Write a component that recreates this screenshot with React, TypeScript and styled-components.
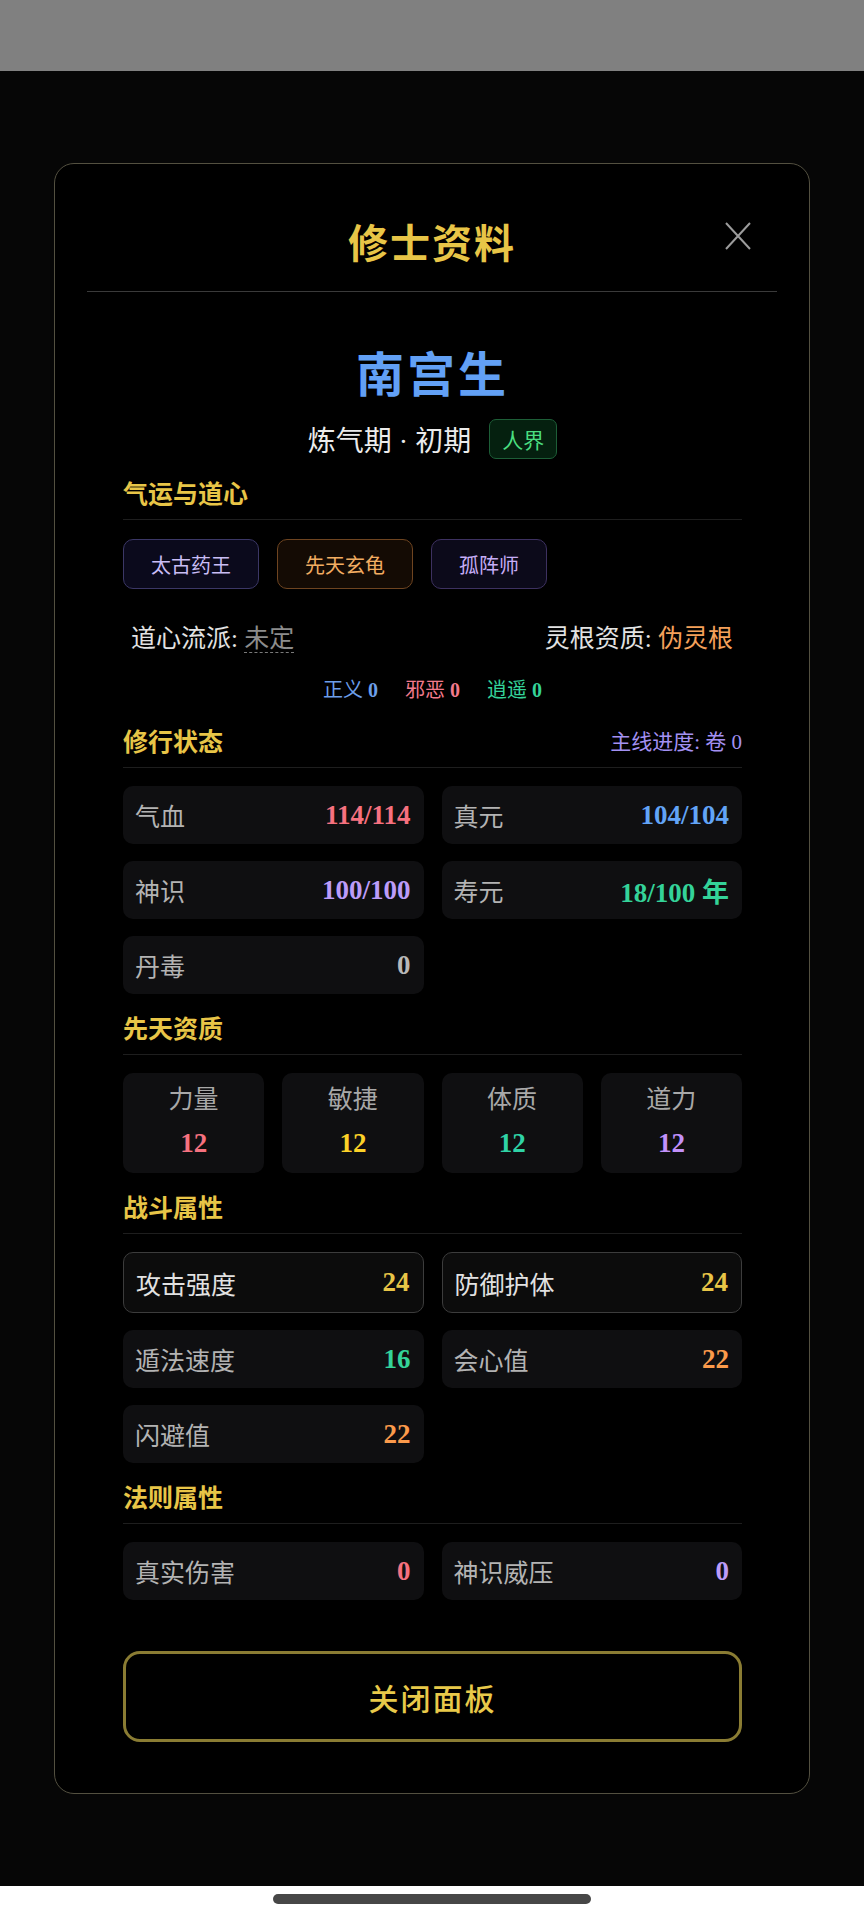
import React from "react";
import styled, { createGlobalStyle } from "styled-components";

const Global = createGlobalStyle`
  html, body { margin: 0; padding: 0; background: #ffffff; }
  body { font-family: "Liberation Serif", "Noto Sans CJK SC", serif; }
  * { box-sizing: border-box; }
`;

const TopBar = styled.div`
  height: 71px;
  background: #808080;
`;

const Screen = styled.div`
  height: 1815px;
  background: #060606;
  padding-top: 92px;
`;

const BottomStrip = styled.div`
  height: 34px;
  background: #ffffff;
  display: flex;
  justify-content: center;
  padding-top: 8px;
`;

const HomeBar = styled.div`
  width: 318px;
  height: 10px;
  border-radius: 5px;
  background: #474747;
`;

const Modal = styled.div`
  width: 756px;
  margin: 0 auto;
  background: #000;
  border: 1px solid #535040;
  border-radius: 20px;
`;

const Header = styled.div`
  margin: 0 32px;
  padding: 49px 0 22px;
  border-bottom: 1px solid #3a3a3a;
  display: grid;
  grid-template-columns: 1fr auto 1fr;
  align-items: center;
`;

const Title = styled.h1`
  grid-column: 2;
  margin: 0;
  font-family: "Noto Sans CJK SC", sans-serif;
  font-size: 40px;
  line-height: 56px;
  font-weight: 700;
  letter-spacing: 2px;
  color: #e8c547;
`;

const CloseIcon = styled.button`
  grid-column: 3;
  justify-self: end;
  margin: 0 25px 10px 0;
  padding: 0;
  width: 28px;
  height: 28px;
  background: none;
  border: none;
  display: flex;
  align-items: center;
  justify-content: center;
`;

const Body = styled.div`
  padding: 49px 67px 51px 68px;
  display: flex;
  flex-direction: column;
`;

const Name = styled.div`
  text-align: center;
  font-family: "Noto Sans CJK SC", sans-serif;
  font-size: 48px;
  line-height: 60px;
  font-weight: 700;
  letter-spacing: 3px;
  color: #62a0f5;
`;

const RealmRow = styled.div`
  margin-top: 18px;
  display: flex;
  justify-content: center;
  align-items: center;
  gap: 18px;
`;

const RealmText = styled.span`
  font-size: 28px;
  color: #ebebeb;
`;

const Badge = styled.span`
  height: 40px;
  padding: 0 12px;
  display: inline-flex;
  align-items: center;
  border-radius: 7px;
  border: 1px solid #1d5e37;
  background: #05200f;
  color: #4ade80;
  font-size: 21px;
`;

const SectionHead = styled.div<{ $mt: number }>`
  margin-top: ${(p) => p.$mt}px;
  padding-bottom: 11px;
  border-bottom: 1px solid #1e1e1e;
  display: flex;
  justify-content: space-between;
  align-items: center;
`;

const SectionTitle = styled.h2`
  margin: 0;
  font-family: "Noto Sans CJK SC", sans-serif;
  font-size: 25px;
  line-height: 32px;
  font-weight: 700;
  color: #e8c547;
`;

const SectionAside = styled.span`
  font-size: 21px;
  color: #a391f2;
`;

const TagRow = styled.div`
  margin-top: 19px;
  display: flex;
  gap: 18px;
`;

const tagTones = {
  violet: { border: "#3b3766", bg: "#0b0a1c", color: "#c9bdf5" },
  amber: { border: "#6e4420", bg: "#140b04", color: "#f2ad62" },
  purple: { border: "#3d3160", bg: "#0c0a1a", color: "#c6adf7" },
};

const Tag = styled.span<{ $tone: keyof typeof tagTones }>`
  height: 50px;
  padding: 0 27px;
  display: inline-flex;
  align-items: center;
  border-radius: 10px;
  border: 1px solid ${(p) => tagTones[p.$tone].border};
  background: ${(p) => tagTones[p.$tone].bg};
  color: ${(p) => tagTones[p.$tone].color};
  font-size: 20px;
`;

const DaoRow = styled.div`
  margin-top: 34px;
  padding: 0 9px 0 8px;
  display: flex;
  justify-content: space-between;
  font-size: 25px;
  line-height: 32px;
  color: #e2e2e2;
`;

const Muted = styled.span`
  color: #8c8c8c;
  border-bottom: 1px dashed #7a7a7a;
`;

const Orange = styled.span`
  color: #f5a05a;
`;

const AlignRow = styled.div`
  margin-top: 22px;
  display: flex;
  justify-content: center;
  gap: 27px;
  font-size: 20px;
  line-height: 26px;
`;

const AlignItem = styled.span<{ $c: string }>`
  color: ${(p) => p.$c};
  b { font-weight: 700; }
`;

const Grid2 = styled.div`
  margin-top: 18px;
  display: grid;
  grid-template-columns: 1fr 1fr;
  gap: 17px 18px;
`;

const StatCard = styled.div<{ $outlined?: boolean }>`
  height: ${(p) => (p.$outlined ? 61 : 58)}px;
  padding: 0 13px 0 12px;
  display: flex;
  justify-content: space-between;
  align-items: center;
  border-radius: 10px;
  background: ${(p) => (p.$outlined ? "#0c0c0c" : "#0f0f11")};
  border: ${(p) => (p.$outlined ? "1px solid #3c3c3c" : "none")};
  box-shadow: 0 2px 8px rgba(0, 0, 0, 0.7);
`;

const StatLabel = styled.span<{ $bright?: boolean }>`
  font-size: 25px;
  color: ${(p) => (p.$bright ? "#e2e2e2" : "#b3b3b3")};
`;

const StatValue = styled.span<{ $c: string }>`
  font-size: 27px;
  font-weight: 700;
  color: ${(p) => p.$c};
`;

const Grid4 = styled.div`
  margin-top: 18px;
  display: grid;
  grid-template-columns: repeat(4, 1fr);
  gap: 18px;
`;

const AttrCard = styled.div`
  height: 100px;
  padding-top: 11px;
  display: flex;
  flex-direction: column;
  align-items: center;
  gap: 11px;
  border-radius: 10px;
  background: #0f0f11;
  box-shadow: 0 2px 8px rgba(0, 0, 0, 0.7);
`;

const AttrLabel = styled.span`
  font-size: 25px;
  line-height: 32px;
  color: #a8a8a8;
`;

const AttrValue = styled.span<{ $c: string }>`
  font-size: 27px;
  line-height: 32px;
  font-weight: 700;
  color: ${(p) => p.$c};
`;

const CloseButton = styled.button`
  margin-top: 51px;
  height: 91px;
  width: 100%;
  background: transparent;
  border: 3px solid #8a7c33;
  border-radius: 17px;
  color: #e8c94a;
  font-family: "Noto Sans CJK SC", sans-serif;
  font-size: 30px;
  font-weight: 500;
  letter-spacing: 2px;
`;

const C = {
  red: "#f6717f",
  blue: "#62a4f7",
  purple: "#bc9cf9",
  teal: "#34d399",
  grey: "#b8b8b8",
  gold: "#e8c547",
  orange: "#fb9a4b",
  yellow: "#fcd228",
};

type Stat = { label: string; value: string; c: string; outlined?: boolean };

const status: Stat[] = [
  { label: "气血", value: "114/114", c: C.red },
  { label: "真元", value: "104/104", c: C.blue },
  { label: "神识", value: "100/100", c: C.purple },
  { label: "寿元", value: "18/100 年", c: C.teal },
  { label: "丹毒", value: "0", c: C.grey },
];

const attrs = [
  { label: "力量", value: "12", c: C.red },
  { label: "敏捷", value: "12", c: C.yellow },
  { label: "体质", value: "12", c: "#2fd3a6" },
  { label: "道力", value: "12", c: "#c291fa" },
];

const combat: Stat[] = [
  { label: "攻击强度", value: "24", c: C.gold, outlined: true },
  { label: "防御护体", value: "24", c: C.gold, outlined: true },
  { label: "遁法速度", value: "16", c: C.teal },
  { label: "会心值", value: "22", c: C.orange },
  { label: "闪避值", value: "22", c: C.orange },
];

const laws: Stat[] = [
  { label: "真实伤害", value: "0", c: C.red },
  { label: "神识威压", value: "0", c: C.purple },
];

function StatList({ items }: { items: Stat[] }) {
  return (
    <Grid2>
      {items.map((s) => (
        <StatCard key={s.label} $outlined={s.outlined}>
          <StatLabel $bright={s.outlined}>{s.label}</StatLabel>
          <StatValue $c={s.c}>{s.value}</StatValue>
        </StatCard>
      ))}
    </Grid2>
  );
}

export default function App() {
  return (
    <>
      <Global />
      <TopBar />
      <Screen>
        <Modal>
          <Header>
            <Title>修士资料</Title>
            <CloseIcon aria-label="关闭">
              <svg width="26" height="28" viewBox="0 0 26 28">
                <path d="M1 1 L25 27 M25 1 L1 27" stroke="#9b9b9b" strokeWidth="2" fill="none" />
              </svg>
            </CloseIcon>
          </Header>
          <Body>
            <Name>南宫生</Name>
            <RealmRow>
              <RealmText>炼气期 · 初期</RealmText>
              <Badge>人界</Badge>
            </RealmRow>

            <SectionHead $mt={17}>
              <SectionTitle>气运与道心</SectionTitle>
            </SectionHead>
            <TagRow>
              <Tag $tone="violet">太古药王</Tag>
              <Tag $tone="amber">先天玄龟</Tag>
              <Tag $tone="purple">孤阵师</Tag>
            </TagRow>
            <DaoRow>
              <span>
                道心流派: <Muted>未定</Muted>
              </span>
              <span>
                灵根资质: <Orange>伪灵根</Orange>
              </span>
            </DaoRow>
            <AlignRow>
              <AlignItem $c="#6d9fea">
                正义 <b>0</b>
              </AlignItem>
              <AlignItem $c="#f27a8c">
                邪恶 <b>0</b>
              </AlignItem>
              <AlignItem $c="#34d399">
                逍遥 <b>0</b>
              </AlignItem>
            </AlignRow>

            <SectionHead $mt={21}>
              <SectionTitle>修行状态</SectionTitle>
              <SectionAside>主线进度: 卷 0</SectionAside>
            </SectionHead>
            <StatList items={status} />

            <SectionHead $mt={17}>
              <SectionTitle>先天资质</SectionTitle>
            </SectionHead>
            <Grid4>
              {attrs.map((a) => (
                <AttrCard key={a.label}>
                  <AttrLabel>{a.label}</AttrLabel>
                  <AttrValue $c={a.c}>{a.value}</AttrValue>
                </AttrCard>
              ))}
            </Grid4>

            <SectionHead $mt={17}>
              <SectionTitle>战斗属性</SectionTitle>
            </SectionHead>
            <StatList items={combat} />

            <SectionHead $mt={17}>
              <SectionTitle>法则属性</SectionTitle>
            </SectionHead>
            <StatList items={laws} />

            <CloseButton>关闭面板</CloseButton>
          </Body>
        </Modal>
      </Screen>
      <BottomStrip>
        <HomeBar />
      </BottomStrip>
    </>
  );
}
